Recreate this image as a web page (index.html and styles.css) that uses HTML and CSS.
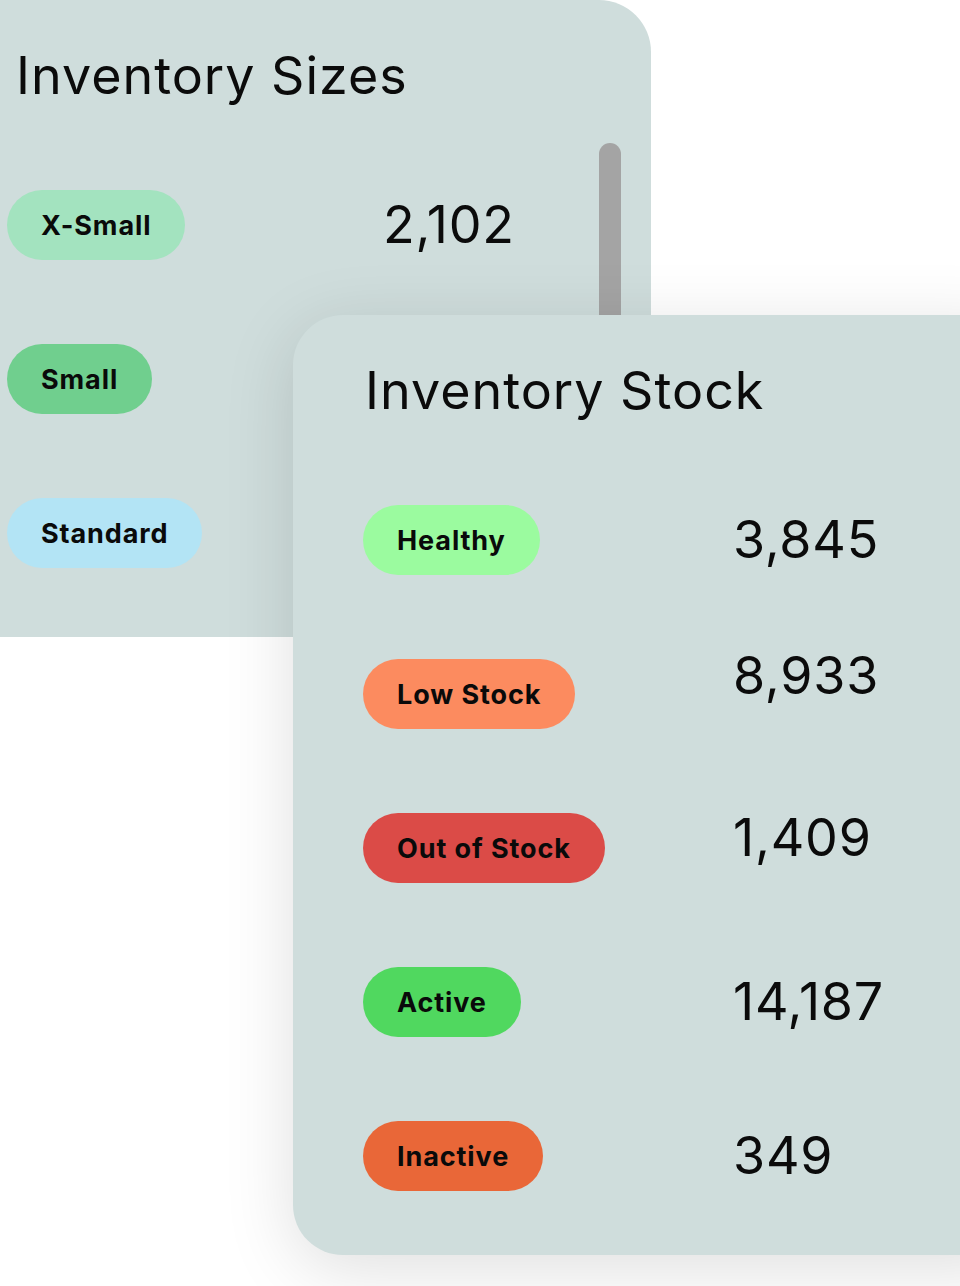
FILE: index.html
```html
<!DOCTYPE html>
<html lang="en">
<head>
<meta charset="utf-8">
<title>Inventory</title>
<link rel="stylesheet" href="styles.css">
</head>
<body>
<div class="stage">
  <section class="card card-sizes">
    <h2 class="card-title">Inventory Sizes</h2>
    <div class="rows">
      <div class="row"><span class="pill pill-xsmall">X-Small</span><span class="value">2,102</span></div>
      <div class="row"><span class="pill pill-small">Small</span><span class="value"></span></div>
      <div class="row"><span class="pill pill-standard">Standard</span><span class="value"></span></div>
    </div>
    <div class="scrollbar"></div>
  </section>
  <section class="card card-stock">
    <h2 class="card-title">Inventory Stock</h2>
    <div class="rows">
      <div class="row"><span class="pill pill-healthy">Healthy</span><span class="value">3,845</span></div>
      <div class="row"><span class="pill pill-low">Low Stock</span><span class="value raise-lg">8,933</span></div>
      <div class="row"><span class="pill pill-out">Out of Stock</span><span class="value raise-sm">1,409</span></div>
      <div class="row"><span class="pill pill-active">Active</span><span class="value">14,187</span></div>
      <div class="row"><span class="pill pill-inactive">Inactive</span><span class="value">349</span></div>
    </div>
  </section>
</div>
</body>
</html>
```

FILE: styles.css
```css
* { box-sizing: border-box; }
html, body { margin: 0; padding: 0; }
body {
  width: 960px;
  height: 1286px;
  overflow: hidden;
  background: #ffffff;
  font-family: Inter, "Noto Sans", sans-serif;
  color: #0b0b0b;
}
.stage {
  position: relative;
  width: 960px;
  height: 1286px;
  overflow: hidden;
}
.card {
  position: absolute;
  background: #cfdddc;
}
.card-sizes {
  left: 0;
  top: 0;
  width: 651px;
  height: 637px;
  border-top-right-radius: 52px;
  padding: 46px 0 0 0;
}
.card-stock {
  left: 293px;
  top: 315px;
  width: 720px;
  height: 940px;
  border-radius: 50px 0 0 50px;
  box-shadow: 0 14px 70px rgba(0, 0, 0, 0.13);
  padding: 46px 0 0 0;
}
.card-title {
  margin: 0;
  font-size: 52px;
  font-weight: 400;
  line-height: 60px;
  letter-spacing: 1px;
}
.card-sizes .card-title { padding-left: 16px; }
.card-stock .card-title { padding-left: 72px; }
.rows {
  display: flex;
  flex-direction: column;
  gap: 84px;
}
.card-sizes .rows { margin-top: 84px; padding-left: 7px; }
.card-stock .rows { margin-top: 84px; padding-left: 70px; }
.row {
  display: grid;
  align-items: center;
  grid-template-rows: 70px;
  height: 70px;
}
.card-sizes .row { grid-template-columns: 376px auto; }
.card-stock .row { grid-template-columns: 370px auto; }
.pill {
  justify-self: start;
  display: inline-flex;
  align-items: center;
  height: 70px;
  padding: 0 34px 0 34px;
  border-radius: 35px;
  font-size: 27px;
  font-weight: 700;
  letter-spacing: 0.9px;
  color: #0a0a0a;
}
.value {
  font-size: 52px;
  font-weight: 400;
  line-height: 60px;
  letter-spacing: 0.8px;
}
.value.raise-lg { padding-bottom: 36px; }
.value.raise-sm { padding-bottom: 20px; }
.pill-xsmall { background: #a3e3bf; }
.pill-small { background: #70cf8e; }
.pill-standard { background: #b3e4f5; }
.pill-healthy { background: #9bfb9f; }
.pill-low { background: #fc8b5f; }
.pill-out { background: #db4b47; }
.pill-active { background: #50d85f; }
.pill-inactive { background: #e96738; }
.scrollbar {
  position: absolute;
  left: 599px;
  top: 143px;
  width: 22px;
  height: 320px;
  border-radius: 11px 11px 0 0;
  background: #a4a4a4;
}
```
